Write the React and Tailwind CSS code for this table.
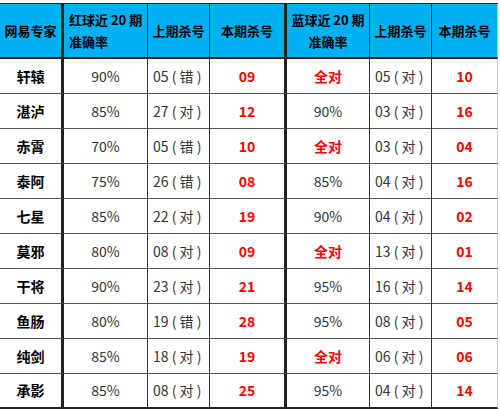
const rows = [
  ['轩辕', '90%', '05 ( 错 )', '09', '全对', '05 ( 对 )', '10'],
  ['湛泸', '85%', '27 ( 对 )', '12', '90%', '03 ( 对 )', '16'],
  ['赤霄', '70%', '05 ( 错 )', '10', '全对', '03 ( 对 )', '04'],
  ['泰阿', '75%', '26 ( 错 )', '08', '85%', '04 ( 对 )', '16'],
  ['七星', '85%', '22 ( 对 )', '19', '90%', '04 ( 对 )', '02'],
  ['莫邪', '80%', '08 ( 对 )', '09', '全对', '13 ( 对 )', '01'],
  ['干将', '90%', '23 ( 对 )', '21', '95%', '16 ( 对 )', '14'],
  ['鱼肠', '80%', '19 ( 错 )', '28', '95%', '08 ( 对 )', '05'],
  ['纯剑', '85%', '18 ( 对 )', '19', '全对', '06 ( 对 )', '06'],
  ['承影', '85%', '08 ( 对 )', '25', '95%', '04 ( 对 )', '14'],
];

const cols = 'grid grid-cols-[64px_84px_62px_77px_83px_62px_66px]';

function HeadCell({ children, className = '' }) {
  return (
    <div
      className={
        'h-[55px] bg-[#00b0f0] border-b-2 border-r border-[#222] flex items-center text-[13px] font-bold text-black leading-[22px] ' +
        className
      }
    >
      {children}
    </div>
  );
}

function Cell({ children, className = '', last }) {
  return (
    <div
      className={
        'h-[35px] border-r border-[#333] flex items-center text-[14px] ' +
        (last ? 'border-b-2 border-b-[#222] ' : 'border-b border-b-[#555] ') +
        className
      }
    >
      {children}
    </div>
  );
}

export default function App() {
  return (
    <div
      className="w-[500px] h-[410px] bg-white pt-[3px]"
      style={{ fontFamily: '"Noto Sans CJK SC", "Noto Sans", sans-serif' }}
    >
      <div className="w-[498px] border-t border-[#222]">
        <div className={cols}>
          <HeadCell className="justify-center border-r-[3px]">网易专家</HeadCell>
          <HeadCell className="pl-[5px]">
            <div>
              <div>红球近 20 期</div>
              <div>准确率</div>
            </div>
          </HeadCell>
          <HeadCell className="justify-center">上期杀号</HeadCell>
          <HeadCell className="justify-center border-r-[3px]">本期杀号</HeadCell>
          <HeadCell className="justify-center text-center">
            <div>
              <div>蓝球近 20 期</div>
              <div>准确率</div>
            </div>
          </HeadCell>
          <HeadCell className="justify-center">上期杀号</HeadCell>
          <HeadCell className="justify-center border-r-[#bbb]">本期杀号</HeadCell>
        </div>
        {rows.map((r, i) => {
          const last = i === rows.length - 1;
          const blueRed = r[4] === '全对';
          return (
            <div key={i} className={cols}>
              <Cell last={last} className="justify-center border-r-[3px] border-r-[#222] font-bold text-black">
                {r[0]}
              </Cell>
              <Cell last={last} className="justify-center text-[#333]">{r[1]}</Cell>
              <Cell last={last} className="pl-[5px] text-[#333] whitespace-pre">{r[2]}</Cell>
              <Cell last={last} className="justify-center border-r-[3px] border-r-[#222] font-bold text-[#ff0000]">
                {r[3]}
              </Cell>
              <Cell
                last={last}
                className={'justify-center ' + (blueRed ? 'font-bold text-[#ff0000]' : 'text-[#333]')}
              >
                {r[4]}
              </Cell>
              <Cell last={last} className="pl-[5px] text-[#333] whitespace-pre">{r[5]}</Cell>
              <Cell last={last} className="justify-center border-r-[#ccc] font-bold text-[#ff0000]">
                {r[6]}
              </Cell>
            </div>
          );
        })}
      </div>
    </div>
  );
}
